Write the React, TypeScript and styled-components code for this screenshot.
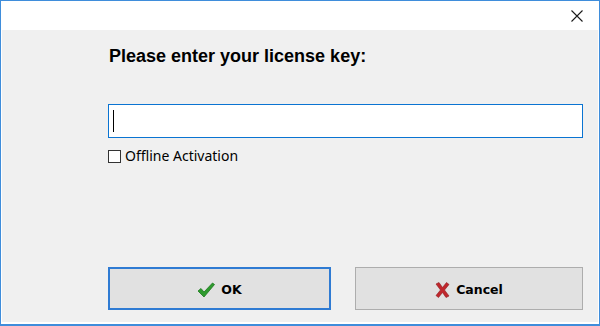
import React from "react";
import styled, { createGlobalStyle } from "styled-components";

const Global = createGlobalStyle`
  html, body { margin: 0; padding: 0; background: #ffffff; }
  * { box-sizing: border-box; }
`;

const Window = styled.div`
  width: 600px;
  height: 326px;
  border: 1px solid #3f8ddb;
  border-bottom-width: 2px;
  background: #ffffff;
  display: flex;
  flex-direction: column;
  overflow: hidden;
`;

const TitleBar = styled.div`
  height: 29px;
  flex: none;
  display: flex;
  align-items: center;
  justify-content: flex-end;
  padding-right: 15px;
  background: #ffffff;
`;

const CloseButton = styled.div`
  width: 14px;
  height: 14px;
  display: flex;
  align-items: center;
  justify-content: center;
  margin-top: 1px;
`;

const Body = styled.div`
  flex: 1;
  margin: 0 1px 2px 1px;
  background: #f0f0f0;
  display: flex;
  flex-direction: column;
  padding: 15px 15px 9px 106px;
`;

const Heading = styled.div`
  font-family: "Liberation Sans", Arial, sans-serif;
  font-weight: bold;
  font-size: 18px;
  line-height: 22px;
  color: #000000;
  margin-left: 1px;
`;

const KeyInput = styled.div`
  margin-top: 37px;
  height: 34px;
  border: 1px solid #0a74d2;
  background: #ffffff;
  display: flex;
  align-items: center;
  padding-left: 4px;
`;

const Caret = styled.div`
  width: 1px;
  height: 22px;
  background: #000000;
`;

const CheckRow = styled.label`
  margin-top: 10px;
  display: flex;
  align-items: center;
  gap: 4px;
  font-family: "Noto Sans", "Open Sans", sans-serif;
  font-size: 14px;
  line-height: 16px;
  color: #000000;
`;

const Box = styled.span`
  width: 13px;
  height: 13px;
  border: 1px solid #333333;
  background: #ffffff;
`;

const Spacer = styled.div`
  flex: 1;
`;

const Buttons = styled.div`
  display: flex;
  gap: 24px;
  margin-bottom: 3px;
`;

const Button = styled.div<{ $primary?: boolean; $width: number }>`
  width: ${(p) => p.$width}px;
  height: 43px;
  background: #e1e1e1;
  border: ${(p) => (p.$primary ? "2px solid #2f7bd3" : "1px solid #adadad")};
  display: flex;
  align-items: center;
  justify-content: center;
  gap: 6px;
  padding-top: 2px;
  font-family: "DejaVu Sans", Tahoma, sans-serif;
  font-weight: bold;
  font-size: 12.5px;
  color: #000000;
`;

const CheckIcon = () => (
  <svg width="18" height="16" viewBox="0 0 18 16">
    <path
      d="M1 9 L4 6.5 L7 10 L15.5 1 L17.5 2.5 L7 15 Z"
      fill="#2e9a2e"
      stroke="#1d7a1d"
      strokeWidth="0.8"
      strokeLinejoin="round"
    />
  </svg>
);

const CrossIcon = () => (
  <svg width="15" height="16" viewBox="0 0 15 16">
    <path
      d="M1 2 L4 0.5 L7.5 5.5 L11.5 0.5 L14 2.5 L9.5 8 L14 14 L11 15.5 L7.5 10.5 L3.5 15.5 L1 13.5 L5.5 8 Z"
      fill="#c0272d"
      stroke="#8e1b1f"
      strokeWidth="0.6"
      strokeLinejoin="round"
    />
  </svg>
);

export default function App() {
  return (
    <>
      <Global />
      <Window>
        <TitleBar>
          <CloseButton>
            <svg width="12" height="12" viewBox="0 0 12 12">
              <path d="M0.5 0.5 L11.5 11.5 M11.5 0.5 L0.5 11.5" stroke="#1a1a1a" strokeWidth="1.1" />
            </svg>
          </CloseButton>
        </TitleBar>
        <Body>
          <Heading>Please enter your license key:</Heading>
          <KeyInput>
            <Caret />
          </KeyInput>
          <CheckRow>
            <Box />
            Offline Activation
          </CheckRow>
          <Spacer />
          <Buttons>
            <Button $primary $width={224}>
              <CheckIcon />
              OK
            </Button>
            <Button $width={229}>
              <CrossIcon />
              Cancel
            </Button>
          </Buttons>
        </Body>
      </Window>
    </>
  );
}
